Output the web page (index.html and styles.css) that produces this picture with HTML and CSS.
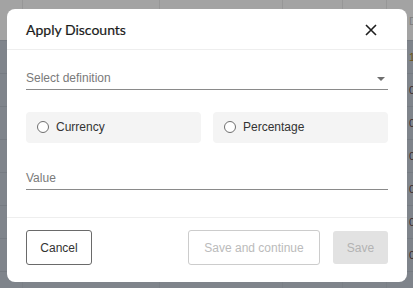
FILE: index.html
```html
<!DOCTYPE html>
<html lang="en">
<head>
    <meta charset="UTF-8">
    <meta name="viewport" content="width=device-width, initial-scale=1.0">
    <title>Apply Discounts</title>
    <link rel="stylesheet" href="styles.css">
</head>
<body>
    <!-- Tabel di belakang overlay -->
    <div class="backdrop-table">
        <div class="table-head">
            <span></span><span></span><span></span><span></span><span></span><span class="head-text">Dc</span>
        </div>
        <div class="table-row"><span></span><span></span><span></span><span></span><span></span><span class="cell-text orange">15</span></div>
        <div class="table-row"><span></span><span></span><span></span><span></span><span></span><span class="cell-text">02</span></div>
        <div class="table-row"><span></span><span></span><span></span><span></span><span></span><span class="cell-text">02</span></div>
        <div class="table-row"><span></span><span></span><span></span><span></span><span></span><span class="cell-text">02</span></div>
        <div class="table-row"><span></span><span></span><span></span><span></span><span></span><span class="cell-text">02</span></div>
        <div class="table-row"><span></span><span></span><span></span><span></span><span></span><span class="cell-text">02</span></div>
        <div class="table-row"><span></span><span></span><span></span><span></span><span></span><span class="cell-text">02</span></div>
        <div class="table-row last-row"><span></span><span></span><span></span><span></span><span></span><span></span></div>
    </div>

    <div class="modal">
        <header class="modal-header">
            <h2 class="modal-title">Apply Discounts</h2>
            <button class="close-btn" aria-label="Close">
                <svg width="12" height="12" viewBox="0 0 12 12">
                    <path d="M1 1 L11 11 M11 1 L1 11" stroke="#1f1f1f" stroke-width="1.6" fill="none"/>
                </svg>
            </button>
        </header>

        <main class="modal-body">
            <div class="field select-field">
                <span class="placeholder">Select definition</span>
                <span class="caret"></span>
            </div>

            <div class="radio-row">
                <label class="radio-box"><span class="radio-circle"></span>Currency</label>
                <label class="radio-box"><span class="radio-circle"></span>Percentage</label>
            </div>

            <div class="field value-field">
                <span class="placeholder">Value</span>
            </div>
        </main>

        <footer class="modal-footer">
            <button class="btn btn-cancel">Cancel</button>
            <div class="footer-right">
                <button class="btn btn-outline" disabled>Save and continue</button>
                <button class="btn btn-save" disabled>Save</button>
            </div>
        </footer>
    </div>
</body>
</html>
```

FILE: styles.css
```css
/* Global */
body {
    margin: 0;
    width: 413px;
    height: 288px;
    overflow: hidden;
    font-family: 'Liberation Sans', Arial, sans-serif;
    background-color: #7f848b;
    position: relative;
}

/* Tabel latar (sudah diredupkan oleh overlay) */
.backdrop-table {
    display: flex;
    flex-direction: column;
    height: 288px;
    overflow: hidden;
}

.table-head,
.table-row {
    display: grid;
    grid-template-columns: 22px 137px 123px 60px 44px 1fr;
    overflow: hidden;
}

.table-head {
    height: 40px;
    flex-shrink: 0;
    background-color: #a3a3a3;
}

.table-head span {
    border-left: 1px solid #979797;
}

.table-head span:first-child,
.table-row span:first-child {
    border-left: none;
}

.table-row {
    height: 33px;
    flex-shrink: 0;
    border-top: 1px solid #767b82;
    box-sizing: border-box;
}

.table-row.last-row {
    height: 17px;
}

.table-row span {
    border-left: 1px solid #7a7f86;
}

.head-text {
    font-size: 11px;
    color: #7c7c7c;
    padding: 15px 0 0 22px;
}

.cell-text {
    font-size: 11px;
    color: #3a2b2b;
    padding: 10px 0 0 22px;
}

.cell-text.orange {
    color: #6b5518;
}

/* Modal */
.modal {
    position: absolute;
    left: 7px;
    top: 9px;
    width: 400px;
    height: 273px;
    background-color: #FFFFFF;
    border-radius: 8px;
    box-sizing: border-box;
    display: flex;
    flex-direction: column;
}

.modal-header {
    height: 41px;
    padding: 0 19px;
    border-bottom: 1px solid #eeeeee;
    box-sizing: border-box;
    display: flex;
    align-items: center;
    justify-content: space-between;
}

.modal-title {
    margin: 0;
    font-family: 'Lato', sans-serif;
    font-size: 14px;
    font-weight: 400;
    color: #1a1a1a;
    padding-top: 1px;
    -webkit-text-stroke: 0.2px #1a1a1a;
}

.close-btn {
    background: none;
    border: none;
    padding: 0;
    margin-right: 11px;
    margin-top: 1px;
    display: flex;
    cursor: pointer;
}

.modal-body {
    padding: 16px 19px 0;
    height: 168px;
    box-sizing: border-box;
    border-bottom: 1px solid #eeeeee;
}

.field {
    height: 24px;
    border-bottom: 1px solid #8a8a8a;
    box-sizing: border-box;
    display: flex;
    align-items: center;
    justify-content: space-between;
}

.placeholder {
    font-size: 12px;
    color: #7a7a7a;
}

.caret {
    width: 0;
    height: 0;
    border-left: 4px solid transparent;
    border-right: 4px solid transparent;
    border-top: 4px solid #6e6e6e;
    margin-right: 3px;
    margin-top: 2px;
}

.radio-row {
    display: flex;
    gap: 12px;
    margin-top: 22px;
}

.radio-box {
    flex: 1;
    height: 31px;
    background-color: #f4f4f4;
    border-radius: 4px;
    display: flex;
    align-items: center;
    font-size: 12px;
    color: #333333;
    padding-left: 11px;
    padding-bottom: 1px;
    box-sizing: border-box;
}

.radio-circle {
    width: 12px;
    height: 12px;
    border: 1px solid #6f6f6f;
    border-radius: 50%;
    box-sizing: border-box;
    margin-right: 7px;
    background-color: #ffffff;
}

.value-field {
    margin-top: 23px;
}

/* Footer */
.modal-footer {
    flex: 1;
    padding: 12px 19px 0;
    display: flex;
    align-items: flex-start;
    justify-content: space-between;
}

.footer-right {
    display: flex;
    gap: 13px;
    align-items: center;
}

.btn {
    font-family: 'Liberation Sans', Arial, sans-serif;
    font-size: 12px;
    height: 35px;
    border-radius: 3px;
    box-sizing: border-box;
    background-color: #FFFFFF;
    padding: 0;
}

.btn-cancel {
    width: 66px;
    border: 1px solid #6a6a6a;
    color: #333333;
}

.btn-outline {
    width: 132px;
    border: 1px solid #cccccc;
    color: #bbbbbb;
}

.btn-save {
    width: 55px;
    height: 33px;
    border: none;
    background-color: #e2e2e2;
    color: #b3b3b3;
}
```
